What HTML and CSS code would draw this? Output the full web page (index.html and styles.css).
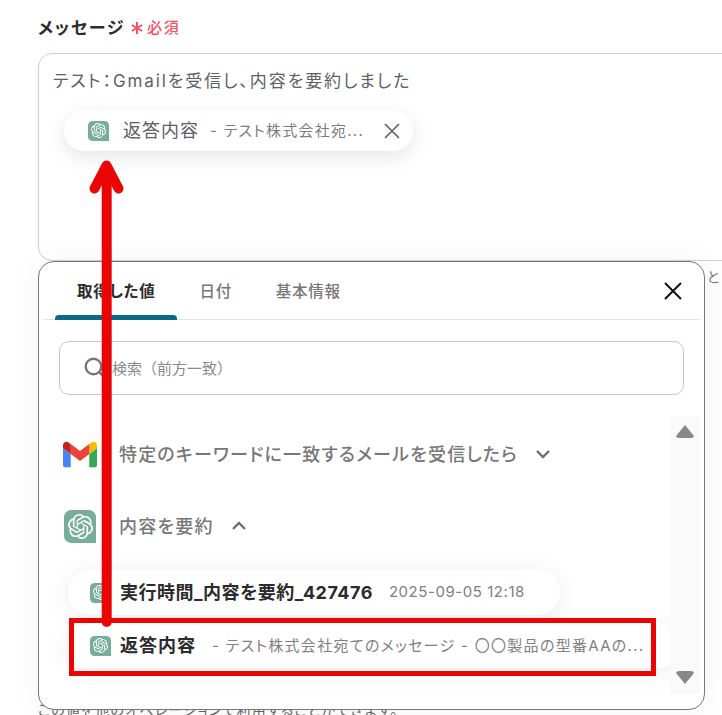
FILE: index.html
```html
<!DOCTYPE html>
<html lang="ja">

<head>
    <meta charset="UTF-8">
    <meta name="viewport" content="width=device-width, initial-scale=1.0">
    <title>メッセージ</title>
    <link rel="stylesheet" href="styles.css">
</head>

<body>
    <svg class="icon-defs" width="0" height="0">
        <symbol id="gpt-knot" viewBox="0 0 24 24">
            <path fill="#fff" d="M22.2819 9.8211a5.9847 5.9847 0 0 0-.5157-4.9108 6.0462 6.0462 0 0 0-6.5098-2.9A6.0651 6.0651 0 0 0 4.9807 4.1818a5.9847 5.9847 0 0 0-3.9977 2.9 6.0462 6.0462 0 0 0 .7427 7.0966 5.98 5.98 0 0 0 .511 4.9107 6.051 6.051 0 0 0 6.5146 2.9001A5.9847 5.9847 0 0 0 13.2599 24a6.0557 6.0557 0 0 0 5.7718-4.2058 5.9894 5.9894 0 0 0 3.9977-2.9001 6.0557 6.0557 0 0 0-.7475-7.0729zm-9.022 12.6081a4.4755 4.4755 0 0 1-2.8764-1.0408l.1419-.0804 4.7783-2.7582a.7948.7948 0 0 0 .3927-.6813v-6.7369l2.02 1.1686a.071.071 0 0 1 .038.052v5.5826a4.504 4.504 0 0 1-4.4945 4.4944zm-9.6607-4.1254a4.4708 4.4708 0 0 1-.5346-3.0137l.142.0852 4.783 2.7582a.7712.7712 0 0 0 .7806 0l5.8428-3.3685v2.3324a.0804.0804 0 0 1-.0332.0615L9.74 19.9502a4.4992 4.4992 0 0 1-6.1408-1.6464zM2.3408 7.8956a4.485 4.485 0 0 1 2.3655-1.9728V11.6a.7664.7664 0 0 0 .3879.6765l5.8144 3.3543-2.0201 1.1685a.0757.0757 0 0 1-.071 0l-4.8303-2.7865A4.504 4.504 0 0 1 2.3408 7.872zm16.5963 3.8558L13.1038 8.364 15.1192 7.2a.0757.0757 0 0 1 .071 0l4.8303 2.7913a4.4944 4.4944 0 0 1-.6765 8.1042v-5.6772a.79.79 0 0 0-.407-.667zm2.0107-3.0231l-.142-.0852-4.7735-2.7818a.7759.7759 0 0 0-.7854 0L9.409 9.2297V6.8974a.0662.0662 0 0 1 .0284-.0615l4.8303-2.7866a4.4992 4.4992 0 0 1 6.6802 4.66zM8.3065 12.863l-2.02-1.1638a.0804.0804 0 0 1-.038-.0567V6.0742a4.4992 4.4992 0 0 1 7.3757-3.4537l-.142.0805L8.704 5.459a.7948.7948 0 0 0-.3927.6813zm1.0976-2.3654l2.602-1.4998 2.6069 1.4998v2.9994l-2.5974 1.4997-2.6067-1.4997Z"/>
        </symbol>
    </svg>

    <div class="field">
        <div class="field-label">
            <span class="label-text">メッセージ</span>
            <svg class="label-star" viewBox="0 0 14 14"><path d="M7 1v12M1.8 4l10.4 6M12.2 4L1.8 10"/></svg>
            <span class="label-required">必須</span>
        </div>
        <div class="message-box">
            <p class="message-text">テスト：Gmailを受信し、内容を要約しました</p>
            <div class="value-tag">
                <span class="gpt-tile tile-small"><svg><use href="#gpt-knot"/></svg></span>
                <span class="tag-name">返答内容</span>
                <span class="tag-value">- テスト株式会社宛...</span>
                <svg class="tag-close" viewBox="0 0 16 16"><path d="M1 1l14 14M15 1L1 15"/></svg>
            </div>
        </div>
        <p class="hint hint-side">と</p>
        <p class="hint hint-bottom">この値を他のオペレーションで利用することができます。</p>
    </div>

    <div class="picker">
        <div class="tabs">
            <div class="tab tab-active">取得した値</div>
            <div class="tab">日付</div>
            <div class="tab">基本情報</div>
            <svg class="picker-close" viewBox="0 0 18 18"><path d="M1 1l16 16M17 1L1 17"/></svg>
        </div>

        <div class="search">
            <svg class="search-icon" viewBox="0 0 22 22"><circle cx="9.5" cy="9.5" r="7.8"/><path d="M15.2 15.2l5 5"/></svg>
            <span class="search-text">検索（前方一致）</span>
        </div>

        <div class="scroll-area">
            <div class="list">
                <div class="group-row">
                    <svg class="gmail-icon" viewBox="52 42 88 66">
                        <path fill="#4285f4" d="M58 108h14V74L52 59v43c0 3.32 2.69 6 6 6"/>
                        <path fill="#34a853" d="M120 108h14c3.32 0 6-2.69 6-6V59l-20 15"/>
                        <path fill="#fbbc04" d="M120 48v26l20-15v-8c0-7.42-8.47-11.65-14.4-7.2"/>
                        <path fill="#ea4335" d="M72 74V48l24 18 24-18v26L96 92"/>
                        <path fill="#c5221f" d="M52 51v8l20 15V48l-5.6-4.2c-5.94-4.45-14.4-.22-14.4 7.2"/>
                    </svg>
                    <span class="group-name">特定のキーワードに一致するメールを受信したら</span>
                    <svg class="chevron" viewBox="0 0 16 10"><path d="M2 2l6 6 6-6"/></svg>
                </div>
                <div class="group-row">
                    <span class="gpt-tile tile-large"><svg><use href="#gpt-knot"/></svg></span>
                    <span class="group-name">内容を要約</span>
                    <svg class="chevron" viewBox="0 0 16 10"><path d="M2 8l6-6 6 6"/></svg>
                </div>
                <div class="list-item">
                    <span class="gpt-tile tile-small"><svg><use href="#gpt-knot"/></svg></span>
                    <span class="item-name">実行時間_内容を要約_427476</span>
                    <span class="item-value">2025-09-05 12:18</span>
                </div>
                <div class="list-item list-item-wide">
                    <span class="gpt-tile tile-small"><svg><use href="#gpt-knot"/></svg></span>
                    <span class="item-name">返答内容</span>
                    <span class="item-value">- テスト株式会社宛てのメッセージ - 〇〇製品の型番AAの...</span>
                </div>
            </div>
            <div class="scrollbar">
                <span class="scroll-up"></span>
                <span class="scroll-down"></span>
            </div>
        </div>
    </div>

    <!-- red annotation on top of the screenshot -->
    <svg class="arrow" viewBox="0 0 722 715">
        <path d="M106.7 622V172"/>
        <path d="M94.5 188.500l12-23 12 23"/>
    </svg>
    <div class="highlight"></div>
</body>

</html>
```

FILE: styles.css
```css
* {
    box-sizing: border-box;
    margin: 0;
    padding: 0;
}

html,
body {
    height: 100%;
    overflow: hidden;
}

body {
    position: relative;
    font-family: Inter, "Noto Sans CJK JP", "Noto Sans", sans-serif;
    font-feature-settings: "palt";
    background-color: #fff;
    color: #333;
}

.icon-defs {
    position: absolute;
}

.field {
    width: 800px;
    padding: 14px 0 0 38px;
}

.field-label {
    display: flex;
    align-items: center;
    height: 24px;
}

.label-text {
    font-size: 17px;
    font-weight: 700;
    letter-spacing: 1.7px;
    color: #2b2b2b;
}

.label-star {
    width: 14px;
    height: 14px;
    margin: 3px 0 0 5px;
    fill: none;
    stroke: #fb4f66;
    stroke-width: 2;
}

.label-required {
    margin-left: 3px;
    font-size: 15px;
    font-weight: 500;
    letter-spacing: 1.7px;
    color: #fb4f66;
}

.message-box {
    height: 208px;
    margin-top: 15px;
    padding: 13px 14px;
    border: 1px solid #c9d0da;
    border-radius: 14px;
}

.message-text {
    font-size: 17px;
    line-height: 28px;
    letter-spacing: 1.9px;
    color: #5a6169;
}

.value-tag {
    display: flex;
    align-items: center;
    width: 349px;
    height: 41px;
    margin: 15px 0 0 11px;
    padding-left: 24px;
    border-radius: 21px;
    background-color: #fff;
    box-shadow: 0 6px 20px rgba(0, 0, 0, 0.1);
}

.gpt-tile {
    display: flex;
    justify-content: center;
    align-items: center;
    flex-shrink: 0;
    background-color: #79ad9b;
    border-radius: 22% 22% 0 22%;
}

.tile-small {
    width: 21px;
    height: 20px;
}

.tile-small svg {
    width: 15px;
    height: 15px;
}

.tile-large {
    width: 32px;
    height: 33px;
}

.tile-large svg {
    width: 25px;
    height: 25px;
}

.tag-name {
    margin: 0 0 3px 14px;
    font-size: 18px;
    letter-spacing: 1px;
    color: #5a6169;
}

.tag-value {
    margin: 0 0 3px 11px;
    font-size: 15px;
    letter-spacing: 1.25px;
    color: #7d7d7d;
    white-space: nowrap;
}

.tag-close {
    width: 16px;
    height: 16px;
    margin-left: 20px;
    fill: none;
    stroke: #5f6368;
    stroke-width: 1.7;
}

.hint {
    font-size: 14px;
    line-height: 18px;
    letter-spacing: 1.2px;
    color: #666;
}

.hint-side {
    margin: 7px 0 0 669px;
    color: #6e7a86;
}

.hint-bottom {
    margin-top: 415px;
}

/* popup over the field */
.picker {
    position: absolute;
    top: 261px;
    left: 38px;
    width: 667px;
    height: 449px;
    background-color: #fff;
    border: 1px solid #777;
    border-radius: 16px;
    box-shadow: 0 0 30px rgba(0, 0, 0, 0.05);
}

.tabs {
    display: flex;
    align-items: stretch;
    height: 58px;
    margin: 0 4px;
    padding-left: 12px;
    border-bottom: 1px solid #e4e4e4;
}

.tab {
    position: relative;
    display: flex;
    align-items: center;
    padding: 0 22px 2px;
    font-size: 15.5px;
    font-weight: 500;
    letter-spacing: 0.7px;
    color: #777;
}

.tab-active {
    font-weight: 700;
    color: #2b2b2b;
}

.tab-active::after {
    content: "";
    position: absolute;
    left: 0;
    right: 0;
    bottom: -1px;
    height: 5px;
    background-color: #0a6a86;
    border-radius: 4px 4px 0 0;
}

.picker-close {
    align-self: center;
    width: 18px;
    height: 18px;
    margin: 0 18px 0 auto;
    fill: none;
    stroke: #111;
    stroke-width: 2;
}

.search {
    display: flex;
    align-items: center;
    height: 54px;
    margin: 21px 20px 0;
    padding-left: 24px;
    border: 1px solid #c8c8c8;
    border-radius: 10px;
}

.search-icon {
    width: 22px;
    height: 22px;
    flex-shrink: 0;
    fill: none;
    stroke: #777;
    stroke-width: 2.4;
}

.search-text {
    margin: 0 0 2px 6px;
    font-size: 15px;
    font-feature-settings: normal;
    color: #8a8a8a;
}

.scroll-area {
    display: flex;
    height: 278px;
    margin: 21px 4px 0 0;
}

.list {
    flex: 1;
    min-width: 0;
    padding-top: 2px;
    overflow: hidden;
}

.group-row {
    display: flex;
    align-items: center;
    height: 72px;
}

.gmail-icon {
    width: 34px;
    height: 27px;
    margin-left: 24px;
}

.tile-large {
    margin-left: 25px;
}

.group-name {
    margin: 0 0 2px 22px;
    font-size: 18px;
    font-weight: 500;
    letter-spacing: 1.2px;
    color: #777;
}

.tile-large + .group-name {
    margin-left: 23px;
}

.chevron {
    width: 16px;
    height: 10px;
    margin-left: 17px;
    fill: none;
    stroke: #6e6e6e;
    stroke-width: 2.4;
}

.list-item {
    display: flex;
    align-items: center;
    width: fit-content;
    height: 45px;
    margin: 8px 0 0 29px;
    padding: 0 35px 0 22px;
    border-radius: 23px;
    background-color: #fff;
    box-shadow: 0 4px 24px rgba(0, 0, 0, 0.08);
}

.list-item-wide {
    width: 612px;
    padding-right: 0;
}

.item-name {
    margin: 0 0 3px 9px;
    font-size: 18px;
    font-weight: 700;
    letter-spacing: 0.5px;
    color: #2b2b2b;
    white-space: nowrap;
}

.item-value {
    margin: 0 0 3px 16px;
    font-size: 15px;
    letter-spacing: 0.55px;
    color: #808080;
    white-space: nowrap;
}

.list-item-wide .item-name {
    letter-spacing: 1px;
}

.list-item-wide .item-value {
    letter-spacing: 1.3px;
}

.scrollbar {
    display: flex;
    flex-direction: column;
    justify-content: space-between;
    align-items: center;
    width: 30px;
    padding: 9px 0 10px;
    background-color: #fafafa;
}

.scroll-up,
.scroll-down {
    width: 18px;
    height: 13px;
    background-color: #888;
}

.scroll-up {
    clip-path: polygon(50% 0, 100% 85%, 100% 100%, 0 100%, 0 85%);
    border-radius: 3px;
}

.scroll-down {
    clip-path: polygon(0 0, 100% 0, 100% 15%, 50% 100%, 0 15%);
    border-radius: 3px;
}

/* annotation overlays */
.arrow {
    position: absolute;
    top: 0;
    left: 0;
    width: 722px;
    height: 715px;
    fill: none;
    stroke: #ea0505;
    stroke-width: 10;
    stroke-linecap: round;
    stroke-linejoin: round;
}

.highlight {
    position: absolute;
    top: 618px;
    left: 69px;
    width: 587px;
    height: 58px;
    border: 5px solid #ea0505;
}
```
